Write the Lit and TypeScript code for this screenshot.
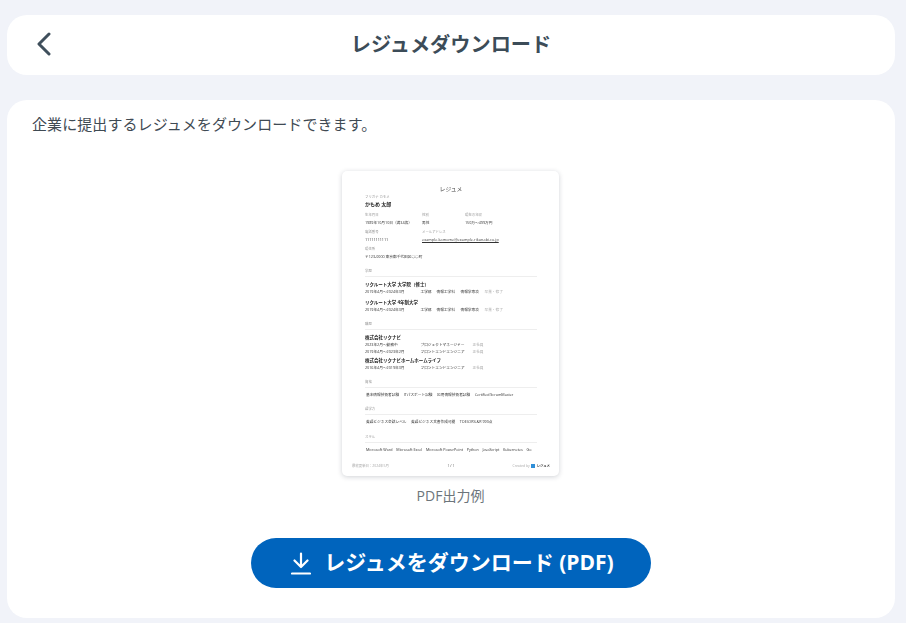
import { LitElement, html, css } from "lit";
import { customElement } from "lit/decorators.js";

const FONT = css`"Open Sans", "Noto Sans CJK JP", sans-serif`;

@customElement("resume-preview")
class ResumePreview extends LitElement {
  static styles = css`
    :host { display: block; width: 217px; height: 305px; box-sizing: border-box; background: #fff; border-radius: 5px;
      box-shadow: 0 1px 5px rgba(40, 50, 70, 0.22); padding: 13px 22px 0 23px; color: #333; font-size: 3.7px; line-height: 6px; font-family: ${FONT}; white-space: nowrap; overflow: hidden; }
    .blur { filter: blur(0.25px); }
    .title { text-align: center; font-size: 5.8px; line-height: 10px; color: #444; }
    .lab { color: #999; font-size: 3.4px; line-height: 6px; }
    .name { font-size: 5px; line-height: 9px; font-weight: 700; color: #222; }
    .grid { display: grid; grid-template-columns: 57px 43px 1fr; margin-top: 3px; }
    .grid2 { display: grid; grid-template-columns: 57px 1fr; margin-top: 2px; }
    .addr { margin-top: 2px; }
    .val { line-height: 8px; margin-top: 1px; }
    .u { text-decoration: underline; letter-spacing: 0.1px; }
    .sec { color: #999; margin-top: 7px; padding-bottom: 2px; border-bottom: 1px solid #eee; line-height: 6px; font-size: 3.4px; }
    .sec.w { margin-top: 8px; }
    .sec.k { margin-top: 9px; }
    .org { font-size: 4.5px; line-height: 8px; font-weight: 700; color: #222; margin-top: 3px; }
    .org.j { margin-top: 1px; }
    .row { display: flex; line-height: 7px; color: #333; }
    .row .a { width: 55.5px; }
    .row .b { width: 52px; }
    .row .d1 { width: 16px; }
    .row .d2 { width: 24px; }
    .row .d3 { width: 24px; }
    .m { color: #aaa; }
    .tags { display: flex; gap: 4.5px; margin-top: 4px; padding-left: 1px; line-height: 6px; color: #333; }
    .tags.tight { gap: 3.7px; }
    .foot { display: grid; grid-template-columns: 1fr auto 1fr; align-items: center; margin: 10px -13px 0; color: #aaa; font-size: 3.4px; }
    .foot .c { color: #555; }
    .brand { display: flex; justify-content: flex-end; align-items: center; gap: 1.5px; }
    .sq { width: 4px; height: 4px; background: #2f8fd8; }
    .bn { color: #444; font-weight: 700; }
  `;
  render() {
    return html`
      <div class="blur">
      <div class="title">レジュメ</div>
      <div class="lab">フリガナ カモメ</div>
      <div class="name">かもめ 太郎</div>
      <div class="grid">
        <div><div class="lab">生年月日</div><div class="val">1989年10月10日（満34歳）</div></div>
        <div><div class="lab">性別</div><div class="val">男性</div></div>
        <div><div class="lab">現在の年収</div><div class="val">150万〜499万円</div></div>
      </div>
      <div class="grid2">
        <div><div class="lab">電話番号</div><div class="val">11111111111</div></div>
        <div><div class="lab">メールアドレス</div><div class="val u">example.kamome@example.rikunabi.co.jp</div></div>
      </div>
      <div class="lab addr">現住所</div>
      <div class="val">〒123-0000 東京都千代田区○○町</div>

      <div class="sec">学歴</div>
      <div class="org">リクルート大学 大学院（修士）</div>
      <div class="row"><span class="a">2019年4月〜2024年3月</span><span class="d1">工学部</span><span class="d2">情報工学科</span><span class="d3">情報学専攻</span><span class="m">卒業・修了</span></div>
      <div class="org">リクルート大学 4年制大学</div>
      <div class="row"><span class="a">2019年4月〜2024年3月</span><span class="d1">工学部</span><span class="d2">情報工学科</span><span class="d3">情報学専攻</span><span class="m">卒業・修了</span></div>

      <div class="sec w">職歴</div>
      <div class="org">株式会社リクナビ</div>
      <div class="row"><span class="a">2023年2月〜勤務中</span><span class="b">プロジェクトマネージャー</span><span class="m">正社員</span></div>
      <div class="row"><span class="a">2019年4月〜2023年2月</span><span class="b">フロントエンドエンジニア</span><span class="m">正社員</span></div>
      <div class="org j">株式会社リクナビホームホームライフ</div>
      <div class="row"><span class="a">2016年4月〜2019年3月</span><span class="b">フロントエンドエンジニア</span><span class="m">正社員</span></div>

      <div class="sec w">資格</div>
      <div class="tags"><span>基本情報技術者試験</span><span>ITパスポート試験</span><span>応用情報技術者試験</span><span>Certified ScrumMaster</span></div>
      <div class="sec w">語学力</div>
      <div class="tags"><span>英語ビジネス会話レベル</span><span>英語ビジネス文書作成可能</span><span>TOEIC(R)L&amp;R 990点</span></div>
      <div class="sec k">スキル</div>
      <div class="tags tight"><span>Microsoft Word</span><span>Microsoft Excel</span><span>Microsoft PowerPoint</span><span>Python</span><span>JavaScript</span><span>Kubernetes</span><span>Go</span></div>

      <div class="foot">
        <span>最終更新日：2024年5月</span><span class="c">1 / 1</span>
        <span class="brand">Created by <i class="sq"></i><span class="bn">レジュメ</span></span>
      </div>
      </div>
    `;
  }
}

@customElement("app-root")
export class AppRoot extends LitElement {
  static styles = css`
    :host { display: block; width: 906px; height: 623px; overflow: hidden; box-sizing: border-box; background: #f1f3f9;
      padding: 15px 11px 0 7px; font-family: ${FONT}; color: #3f4f5c; }
    .card { background: #fff; border-radius: 20px; }
    .head { height: 60px; display: grid; grid-template-columns: 60px 1fr 60px; align-items: center; }
    .back { display: flex; padding-left: 28px; }
    h1 { margin: 0 0 3px; text-align: center; font-size: 20.2px; line-height: 28px; font-weight: 700; color: #3c4c58; }
    .main { margin-top: 25px; height: 518px; padding: 12px 25px 0; box-sizing: border-box; display: flex; flex-direction: column; }
    .lead { margin: 0; font-size: 15px; line-height: 24px; color: #3f4a53; letter-spacing: 0.08px; }
    .fig { margin: 35px 0 0 310px; display: flex; flex-direction: column; align-items: center; width: 217px; }
    figcaption { margin-top: 10px; font-size: 14px; line-height: 20px; color: #6d757b; }
    .btn { align-self: center; margin-top: 32px; width: 400px; height: 50px; border: 0; border-radius: 25px; background: #0064bd; color: #fff;
      font: 700 21px/28px ${FONT}; display: flex; align-items: center; justify-content: center; gap: 13px; padding: 0 0 2px 3px; }
    .btn svg { margin-top: 2px; }
  `;
  render() {
    return html`
      <div class="card head">
        <div class="back">
          <svg width="18" height="26" viewBox="0 0 18 26" fill="none" stroke="#3f4f5c" stroke-width="3" stroke-linecap="round" stroke-linejoin="round"><path d="M14 2 L4 12 L14 22"/></svg>
        </div>
        <h1>レジュメダウンロード</h1>
        <div></div>
      </div>
      <div class="card main">
        <p class="lead">企業に提出するレジュメをダウンロードできます。</p>
        <figure class="fig">
          <resume-preview></resume-preview>
          <figcaption>PDF出力例</figcaption>
        </figure>
        <button class="btn">
          <svg width="20" height="23" viewBox="0 0 20 23" fill="none" stroke="#fff" stroke-width="2.2" stroke-linecap="round" stroke-linejoin="round"><path d="M10 1.5 V14.5 M3.5 8.5 L10 15 L16.5 8.5 M1 21.5 H19"/></svg>
          <span>レジュメをダウンロード (PDF)</span>
        </button>
      </div>
    `;
  }
}
